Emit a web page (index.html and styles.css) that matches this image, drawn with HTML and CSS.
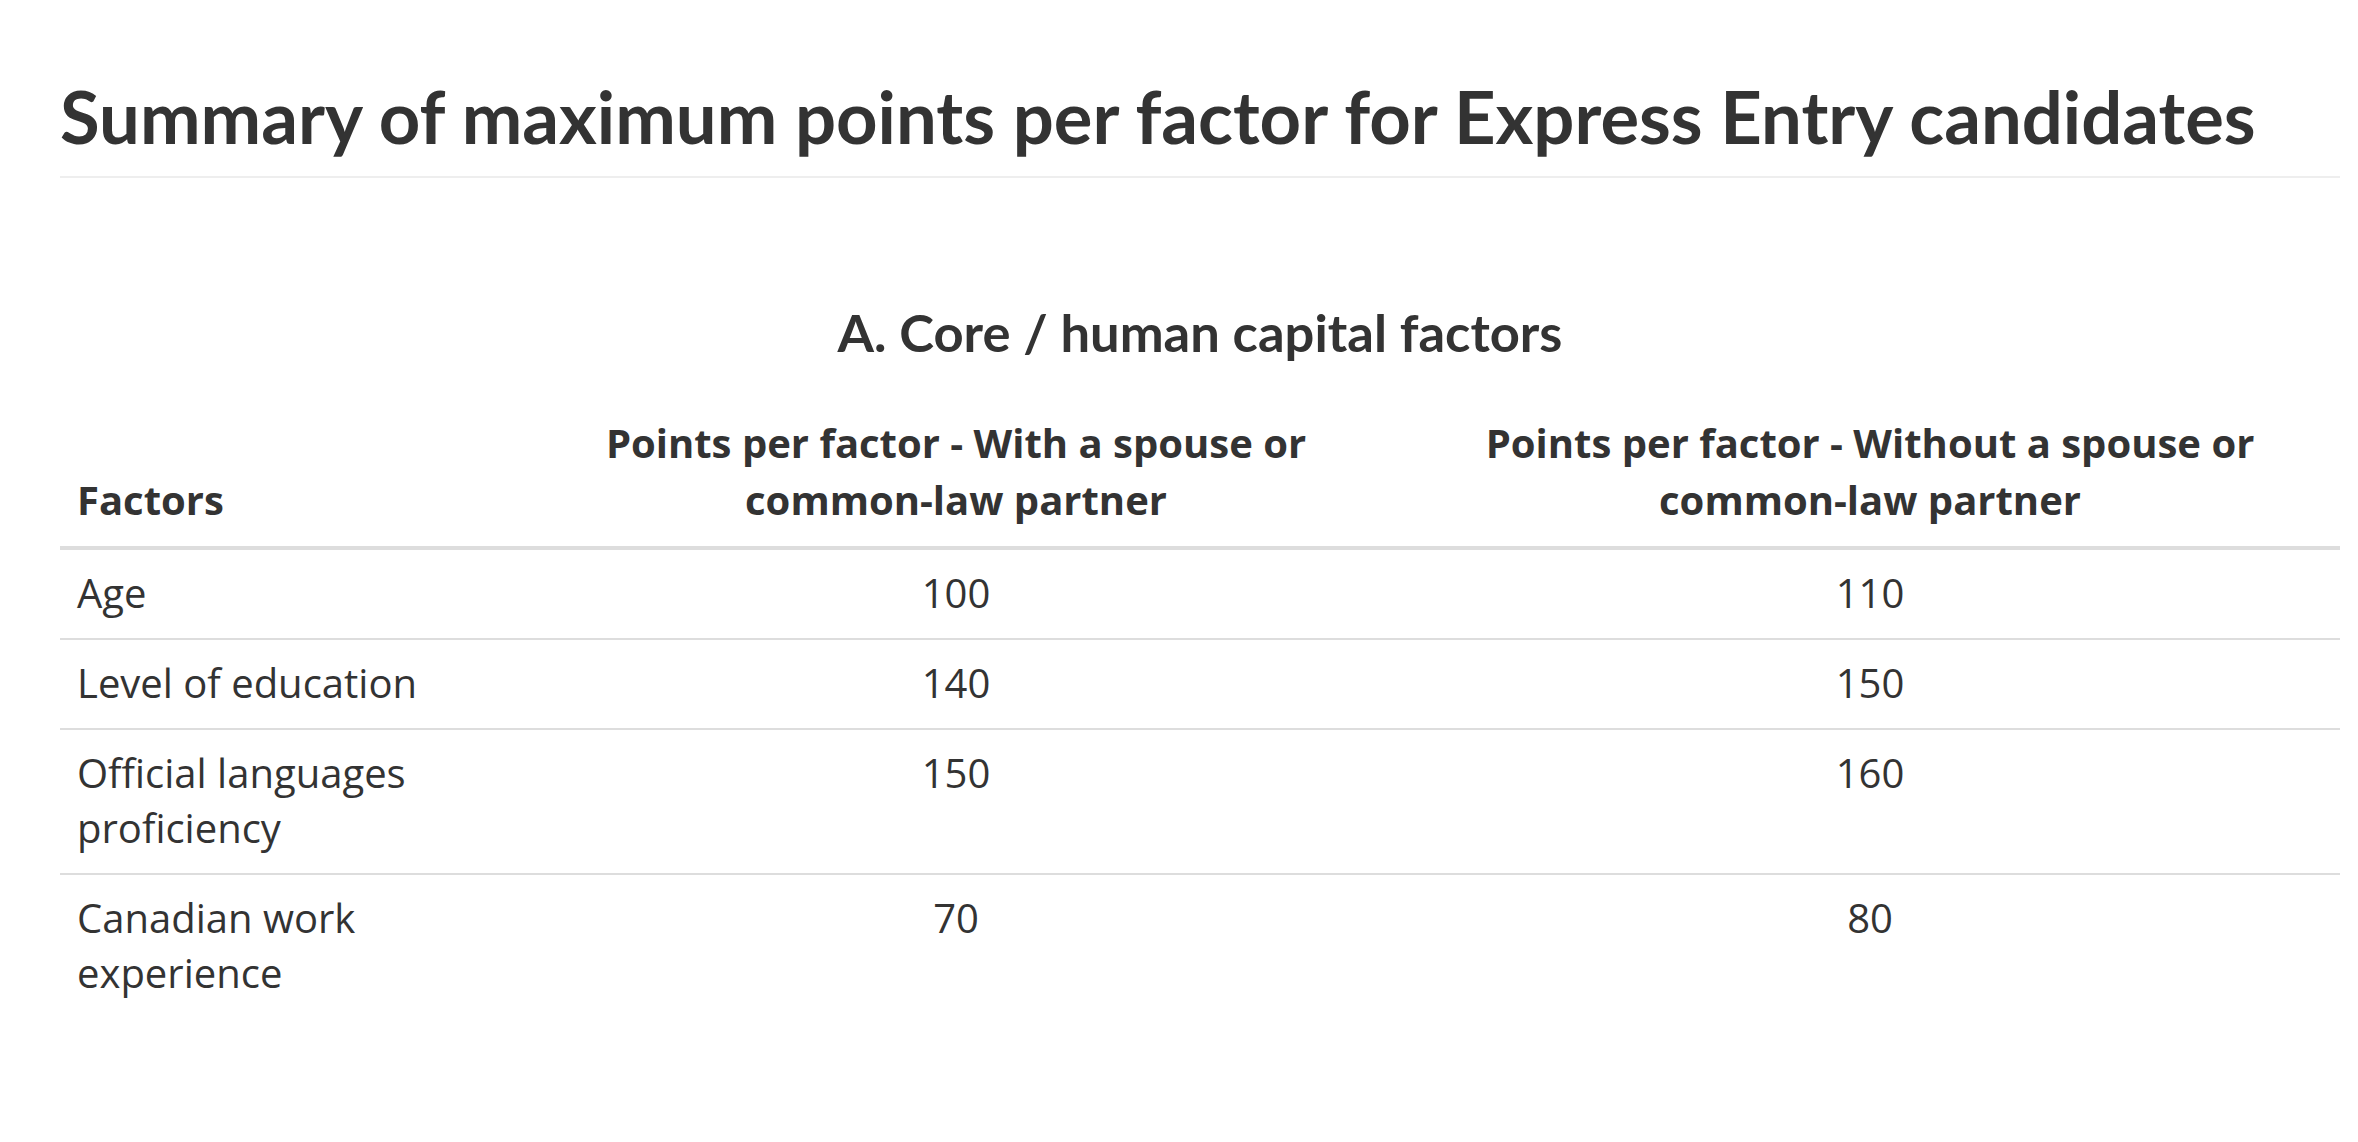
FILE: index.html
```html
<!DOCTYPE html>
<html lang="en">
<head>
<meta charset="utf-8">
<title>Summary of maximum points per factor</title>
<link rel="stylesheet" href="styles.css">
</head>
<body>
<main class="page">
  <h1 class="title">Summary of maximum points per factor for Express Entry candidates</h1>
  <table class="points">
    <caption class="caption">A. Core / human capital factors</caption>
    <colgroup>
      <col class="c1">
      <col class="c2">
      <col class="c3">
    </colgroup>
    <thead>
      <tr>
        <th class="left">Factors</th>
        <th>Points per factor - With a spouse or common-law partner</th>
        <th>Points per factor - Without a spouse or common-law partner</th>
      </tr>
    </thead>
    <tbody>
      <tr>
        <td class="left">Age</td>
        <td>100</td>
        <td>110</td>
      </tr>
      <tr>
        <td class="left">Level of education</td>
        <td>140</td>
        <td>150</td>
      </tr>
      <tr>
        <td class="left">Official languages proficiency</td>
        <td>150</td>
        <td>160</td>
      </tr>
      <tr>
        <td class="left">Canadian work experience</td>
        <td>70</td>
        <td>80</td>
      </tr>
    </tbody>
  </table>
</main>
</body>
</html>
```
FILE: styles.css
```css
html, body {
  margin: 0;
  padding: 0;
  background: #ffffff;
}
body {
  color: #333333;
  font-family: "Open Sans", "Noto Sans", sans-serif;
}
.page {
  margin: 0 18px 0 60px;
}
.title {
  font-family: Lato, "Open Sans", sans-serif;
  font-weight: 700;
  font-size: 72.4px;
  line-height: 80px;
  margin: 76px 0 0 0;
  padding-bottom: 20px;
  border-bottom: 2px solid #eeeeee;
  color: #333333;
}
.points {
  width: 100%;
  margin-top: 124px;
  border-collapse: separate;
  border-spacing: 0;
  table-layout: fixed;
}
.caption {
  font-family: Lato, "Open Sans", sans-serif;
  font-weight: 700;
  font-size: 52.5px;
  line-height: 60px;
  padding-bottom: 37px;
  text-align: center;
  color: #333333;
}
.c1 { width: 452px; }
.c2 { width: 888px; }
.c3 { width: 940px; }
.points th {
  font-weight: 700;
  font-size: 40px;
  line-height: 57px;
  padding: 15px 17px 18px 17px;
  text-align: center;
  vertical-align: bottom;
  border-bottom: 4px solid #dddddd;
}
.points td {
  font-size: 40px;
  line-height: 55px;
  padding: 15px 17px 18px 17px;
  text-align: center;
  vertical-align: top;
  border-top: 2px solid #dddddd;
}
.points tbody tr:first-child td {
  border-top: 0;
}
.points .left {
  text-align: left;
}
```
